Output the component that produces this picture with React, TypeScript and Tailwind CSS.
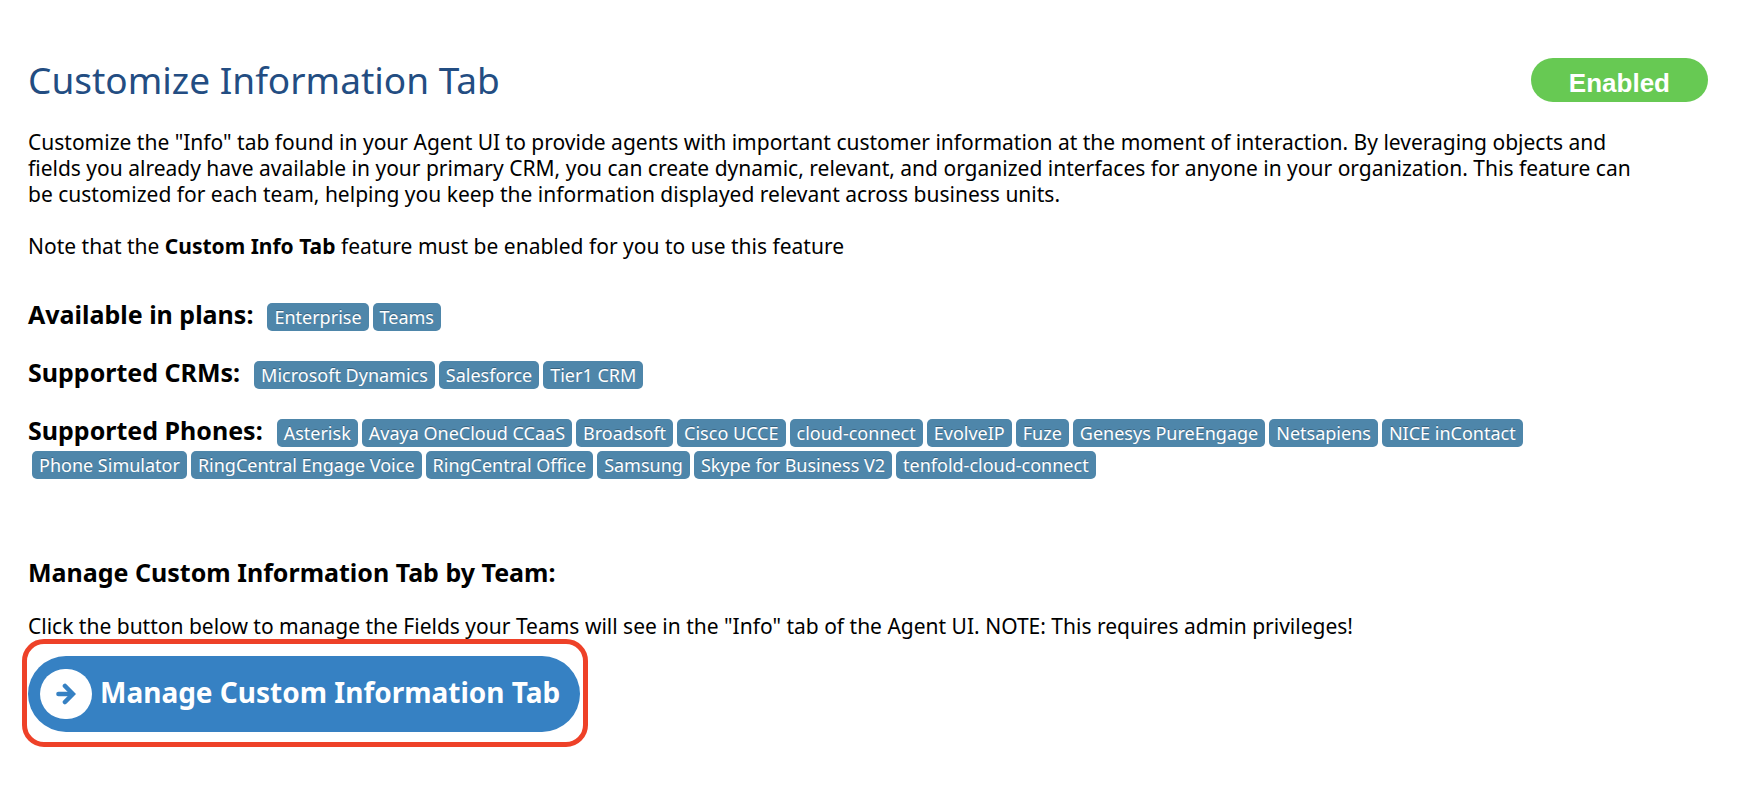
const plans = ["Enterprise", "Teams"];
const crms = ["Microsoft Dynamics", "Salesforce", "Tier1 CRM"];
const phones = [
  "Asterisk",
  "Avaya OneCloud CCaaS",
  "Broadsoft",
  "Cisco UCCE",
  "cloud-connect",
  "EvolveIP",
  "Fuze",
  "Genesys PureEngage",
  "Netsapiens",
  "NICE inContact",
  "Phone Simulator",
  "RingCentral Engage Voice",
  "RingCentral Office",
  "Samsung",
  "Skype for Business V2",
  "tenfold-cloud-connect",
];

function ArrowIcon() {
  return (
    <svg
      viewBox="0 0 20 22"
      className="h-[22px] w-5"
      fill="none"
      stroke="currentColor"
      strokeWidth="4.6"
      strokeLinecap="round"
      strokeLinejoin="miter"
      aria-hidden="true"
    >
      <path d="M2.5 11H14.5" />
      <path d="M9 3L16.8 11L9 19" />
    </svg>
  );
}

function TagRow({ label, tags }: { label: string; tags: string[] }) {
  return (
    <div className="flex flex-wrap items-end gap-y-1">
      <h2 className="mr-2.5 pb-0.5 text-[25px] leading-[30px] font-bold">{label}</h2>
      {tags.map((tag) => (
        <span
          key={tag}
          className="ml-1 rounded-[5px] bg-[#4e86aa] px-[7px] text-lg leading-7 text-white [text-shadow:0_-1px_0_rgba(0,0,0,0.25)]"
        >
          {tag}
        </span>
      ))}
    </div>
  );
}

export default function App() {
  return (
    <main className="min-h-screen bg-white pt-[58px] pr-11 pb-[52px] pl-7 font-['Noto_Sans',sans-serif] text-[21px] leading-[26px] text-black">
      <header className="flex items-start justify-between">
        <h1 className="text-[37px] leading-[44px] text-[#234d82]">Customize Information Tab</h1>
        <span className="rounded-full bg-[#67c953] px-[38px] pt-1.5 font-['Liberation_Sans',Arial,sans-serif] text-[26px] leading-[38px] font-bold text-white">
          Enabled
        </span>
      </header>

      <div className="mr-9 pt-[27px]">
        <p className="pr-7">
          Customize the "Info" tab found in your Agent UI to provide agents with important customer information at the
          moment of interaction. By leveraging objects and fields you already have available in your primary CRM, you
          can create dynamic, relevant, and organized interfaces for anyone in your organization. This feature can be
          customized for each team, helping you keep the information displayed relevant across business units.
        </p>
        <p className="mt-[26px]">
          Note that the <strong>Custom Info Tab</strong> feature must be enabled for you to use this feature
        </p>

        <div className="mt-10 flex flex-col gap-[26px]">
          <TagRow label="Available in plans:" tags={plans} />
          <TagRow label="Supported CRMs:" tags={crms} />
          <TagRow label="Supported Phones:" tags={phones} />
        </div>

        <section className="mt-[78px]">
          <h2 className="text-[25px] leading-[30px] font-bold">Manage Custom Information Tab by Team:</h2>
          <p className="mt-[26px]">
            Click the button below to manage the Fields your Teams will see in the "Info" tab of the Agent UI. NOTE: This
            requires admin privileges!
          </p>
          <div className="-ml-1.5 inline-block rounded-[22px] border-5 border-[#ee4128] pt-3 pr-[3px] pb-2.5 pl-px">
            <button
              type="button"
              className="flex h-[76px] items-center gap-2 rounded-full bg-[#3681c3] pr-5 pl-3 text-[28px] font-bold text-white"
            >
              <span className="flex h-[50px] w-[52px] items-center justify-center rounded-full bg-white text-[#3681c3]">
                <ArrowIcon />
              </span>
              <span className="pb-1">Manage Custom Information Tab</span>
            </button>
          </div>
        </section>
      </div>
    </main>
  );
}
